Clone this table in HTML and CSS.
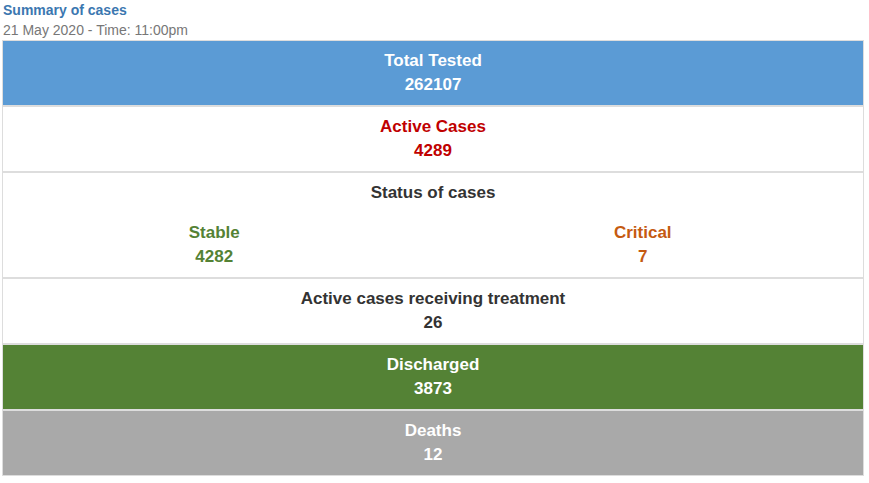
FILE: index.html
```html
<!DOCTYPE html>
<html>
<head>
<meta charset="utf-8">
<link rel="stylesheet" href="styles.css">
</head>
<body>
<div class="page">
  <div class="title">Summary of cases</div>
  <div class="date">21 May 2020 - Time: 11:00pm</div>
  <div class="summary">
    <div class="row blue">
      <div>Total Tested</div>
      <div>262107</div>
    </div>
    <div class="row red">
      <div>Active Cases</div>
      <div>4289</div>
    </div>
    <div class="row status">
      <div>Status of cases</div>
      <div class="split">
        <div class="stable">
          <div>Stable</div>
          <div>4282</div>
        </div>
        <div class="critical">
          <div>Critical</div>
          <div>7</div>
        </div>
      </div>
    </div>
    <div class="row dark">
      <div>Active cases receiving treatment</div>
      <div>26</div>
    </div>
    <div class="row green">
      <div>Discharged</div>
      <div>3873</div>
    </div>
    <div class="row grey">
      <div>Deaths</div>
      <div>12</div>
    </div>
  </div>
</div>
</body>
</html>
```

FILE: styles.css
```css
html, body {
  margin: 0;
  padding: 0;
  background: #fff;
}
.page {
  padding: 0 0 0 2px;
  font-family: "Liberation Sans", Arial, sans-serif;
  font-size: 14px;
}
.title {
  color: #3b77b0;
  font-weight: bold;
  line-height: 20px;
  padding-left: 1px;
}
.date {
  color: #777;
  line-height: 20px;
  padding-left: 1px;
}
.summary {
  width: 862px;
  display: flex;
  flex-direction: column;
}
.row {
  border: 1px solid #ddd;
  padding: 8px;
  text-align: center;
  font-size: 17px;
  font-weight: bold;
  line-height: 24px;
}
.blue { background: #5b9bd5; color: #fff; }
.red { color: #c00000; }
.dark { color: #333; }
.green { background: #548235; color: #fff; }
.grey { background: #a9a9a9; color: #fff; }
.status { color: #333; }
.split {
  display: grid;
  grid-template-columns: 1fr 1fr;
  margin: 16px -2px 0 -11px;
}
.stable { color: #548235; }
.critical { color: #c55a11; }
```
